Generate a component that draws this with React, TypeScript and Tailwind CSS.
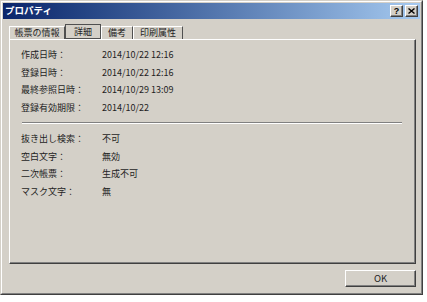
import React from "react";

const font = "font-['Noto_Sans_CJK_JP',sans-serif]";

const details = [
  ["作成日時：", "2014/10/22 12:16"],
  ["登録日時：", "2014/10/22 12:16"],
  ["最終参照日時：", "2014/10/29 13:09"],
  ["登録有効期限：", "2014/10/22"],
];

const flags = [
  ["抜き出し検索：", "不可"],
  ["空白文字：", "無効"],
  ["二次帳票：", "生成不可"],
  ["マスク文字：", "無"],
];

function Row({ label, value }: { label: string; value: string }) {
  return (
    <div className="flex h-[17.5px] items-center">
      <span className="w-[81px] shrink-0">{label}</span>
      <span>{value}</span>
    </div>
  );
}

function CaptionButton({ children }: { children: React.ReactNode }) {
  return (
    <div className="flex h-[12px] w-[13px] items-center justify-center border-t border-l border-white border-r border-b border-r-[#404040] border-b-[#404040] bg-[#d4d0c8] shadow-[inset_-1px_-1px_#808080]">
      {children}
    </div>
  );
}

export default function App() {
  const tabs = [
    { label: "帳票の情報", w: "w-[56px]" },
    { label: "詳細", w: "w-[36px]", active: true },
    { label: "備考", w: "w-[32px]" },
    { label: "印刷属性", w: "w-[50px]" },
  ];

  return (
    <div className={`h-[302px] w-[427px] bg-white text-[9px] text-[#1e1e1e] ${font}`}>
      <div className="h-[295px] w-[423px] border-t border-l border-[#d4d0c8] border-r border-b border-r-[#404040] border-b-[#404040] bg-[#d4d0c8]">
        <div className="h-full border-t border-l border-white border-r border-b border-r-[#808080] border-b-[#808080] p-px">
          {/* title bar */}
          <div className="flex h-[16px] items-center justify-between bg-gradient-to-r from-[#0a246a] to-[#a6caf0] pl-[2px] pr-[2px]">
            <span className="text-[9.5px] font-bold leading-none text-white">プロパティ</span>
            <div className="flex gap-[2px]">
              <CaptionButton>
                <span className="text-[9px] font-bold leading-none text-black font-['Liberation_Sans',sans-serif]">?</span>
              </CaptionButton>
              <CaptionButton>
                <svg width="7" height="6" viewBox="0 0 7 6">
                  <path d="M0.5 0.5 L6.5 5.5 M6.5 0.5 L0.5 5.5" stroke="#000" strokeWidth="1.4" />
                </svg>
              </CaptionButton>
            </div>
          </div>

          <div className="px-[6px] pt-[5px]">
            {/* tabs */}
            <div className="flex h-[15px] items-end">
              {tabs.map((t) =>
                t.active ? (
                  <div
                    key={t.label}
                    className={`${t.w} flex h-[15px] items-center justify-center border border-[#505050]`}
                  >
                    {t.label}
                  </div>
                ) : (
                  <div
                    key={t.label}
                    className={`${t.w} flex h-[13px] items-center justify-center border-t border-l border-white border-r border-r-[#505050]`}
                  >
                    {t.label}
                  </div>
                )
              )}
            </div>

            {/* panel */}
            <div className="h-[225px] w-[407px] border-t border-l border-white border-r border-b border-r-[#404040] border-b-[#404040] shadow-[inset_-1px_-1px_#808080]">
              <div className="px-[11px] pt-[6px]">
                {details.map(([l, v]) => (
                  <Row key={l} label={l} value={v} />
                ))}
                <div className="mt-[6px] mr-[2px] ml-px h-[2px] border-t border-[#808080] border-b border-b-white" />
                <div className="mt-[6px]">
                  {flags.map(([l, v]) => (
                    <Row key={l} label={l} value={v} />
                  ))}
                </div>
              </div>
            </div>

            {/* buttons */}
            <div className="mt-[6px] flex w-[407px] justify-end">
              <button className="flex h-[17px] w-[71px] items-center justify-center border-t border-l border-white border-r border-b border-r-[#404040] border-b-[#404040] bg-[#d4d0c8] shadow-[inset_-1px_-1px_#808080] text-[9.5px]">
                OK
              </button>
            </div>
          </div>
        </div>
      </div>
    </div>
  );
}
